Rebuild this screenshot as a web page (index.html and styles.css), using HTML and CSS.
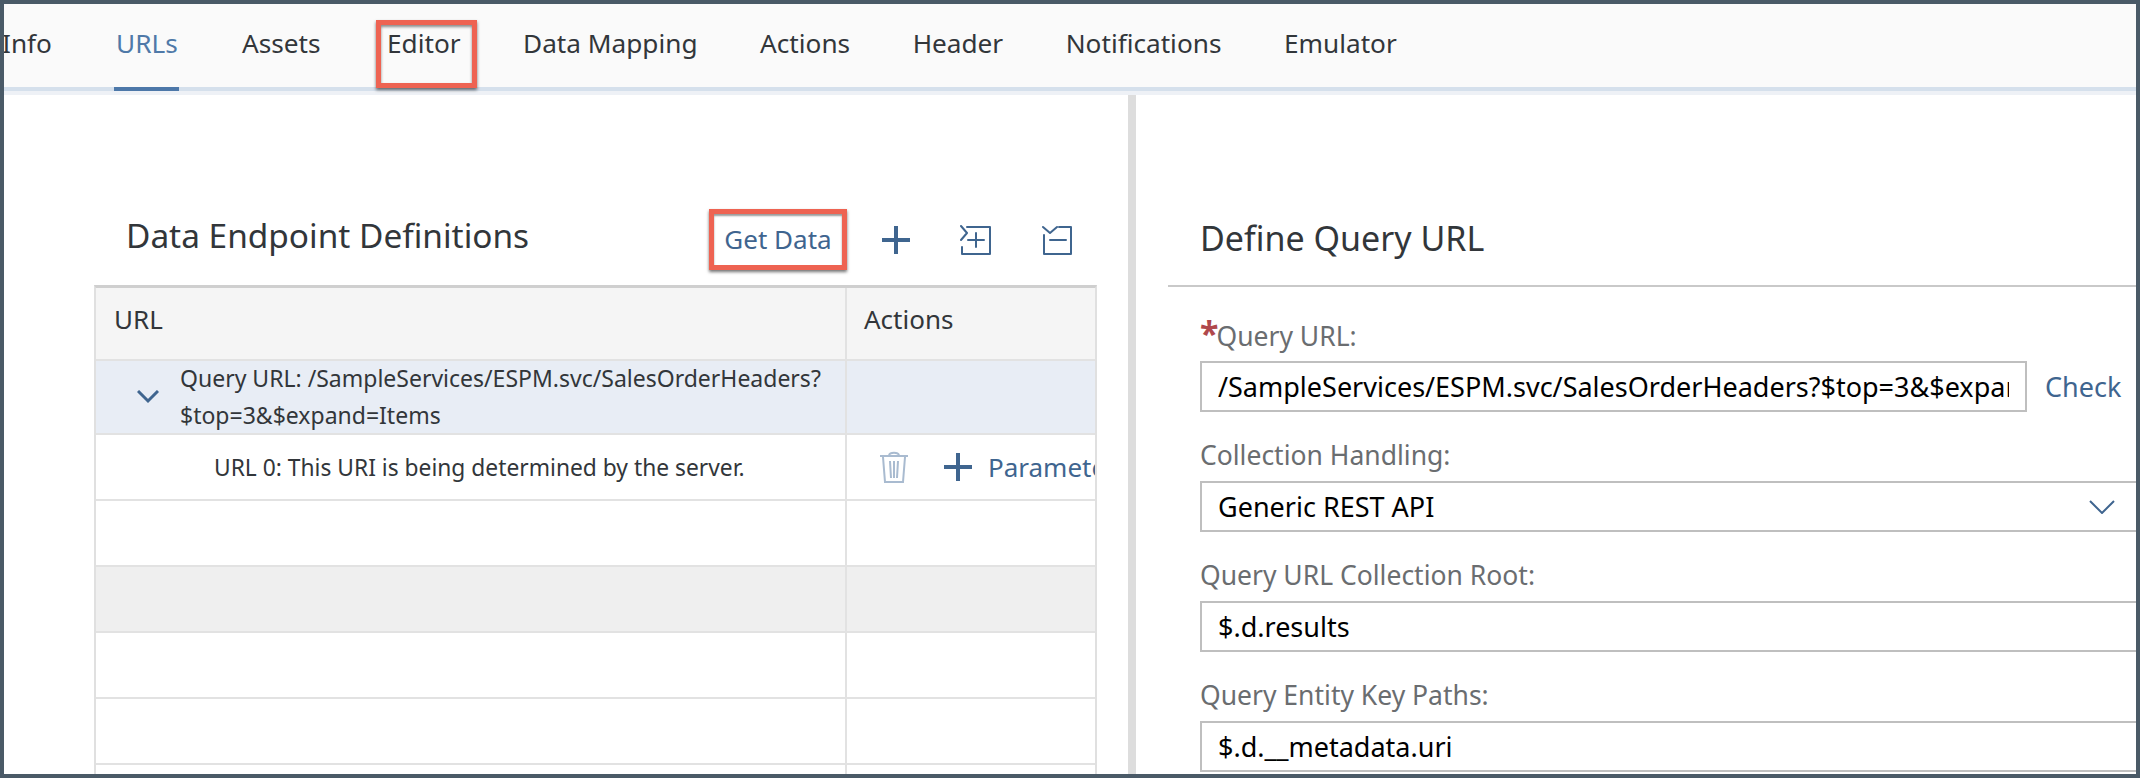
FILE: index.html
```html
<!DOCTYPE html>
<html lang="en">
<head>
<meta charset="utf-8">
<title>Data Endpoint Definitions</title>
<link rel="stylesheet" href="styles.css">
</head>
<body>
<div class="frame">
  <nav class="tabs">
    <a class="tab tab-first">Info</a>
    <a class="tab tab-active">URLs</a>
    <a class="tab">Assets</a>
    <a class="tab tab-marked">Editor</a>
    <a class="tab">Data Mapping</a>
    <a class="tab">Actions</a>
    <a class="tab">Header</a>
    <a class="tab">Notifications</a>
    <a class="tab">Emulator</a>
  </nav>
  <div class="tabs-shade"></div>
  <main class="content">
    <section class="left">
      <div class="toolbar">
        <h2 class="title">Data Endpoint Definitions</h2>
        <button class="get-data">Get Data</button>
        <svg class="tool-plus" viewBox="0 0 28 28"><path d="M14 0v28M0 14h28"/></svg>
        <svg class="tool-icon tool-expand" viewBox="0 0 31 30"><path d="M1 1l6 7-6 7M7 2h23v27H2v-7M8 15h16M16 8v14"/></svg>
        <svg class="tool-icon tool-collapse" viewBox="0 0 31 30"><path d="M1 2l7 6 7-6M17 2h12v27H2V10M8 15h16"/></svg>
      </div>
      <div class="table">
        <div class="row row-head">
          <div class="cell cell-url">URL</div>
          <div class="cell cell-actions">Actions</div>
        </div>
        <div class="row row-parent">
          <div class="cell cell-url cell-tree">
            <svg class="row-chevron" viewBox="0 0 22 14"><path d="M1 1l10 10L21 1"/></svg>
            <span class="query-text">Query URL: /SampleServices/ESPM.svc/SalesOrderHeaders?<br>$top=3&amp;$expand=Items</span>
          </div>
          <div class="cell cell-actions"></div>
        </div>
        <div class="row">
          <div class="cell cell-url cell-child">URL 0: This URI is being determined by the server.</div>
          <div class="cell cell-actions cell-tools">
            <svg class="trash" viewBox="0 0 28 32"><path d="M0 5h28M9 4c1-3 9-3 10 0M3 6l2 25h18l2-25M10 10l1 17M14 10v17M18 10l-1 17"/></svg>
            <svg class="row-plus" viewBox="0 0 28 28"><path d="M14 0v28M0 14h28"/></svg>
            <span class="link">Parameters</span>
          </div>
        </div>
        <div class="row"><div class="cell cell-url"></div><div class="cell cell-actions"></div></div>
        <div class="row row-grey"><div class="cell cell-url"></div><div class="cell cell-actions"></div></div>
        <div class="row"><div class="cell cell-url"></div><div class="cell cell-actions"></div></div>
        <div class="row"><div class="cell cell-url"></div><div class="cell cell-actions"></div></div>
        <div class="row"><div class="cell cell-url"></div><div class="cell cell-actions"></div></div>
      </div>
    </section>
    <div class="splitter"></div>
    <section class="right">
      <h2 class="right-title">Define Query URL</h2>
      <div class="form">
        <label class="label"><span class="req">*</span>Query URL:</label>
        <div class="field-line">
          <div class="input input-url"><span class="value">/SampleServices/ESPM.svc/SalesOrderHeaders?$top=3&amp;$expand=Items</span></div>
          <span class="link check">Check</span>
        </div>
        <label class="label">Collection Handling:</label>
        <div class="input input-wide">
          <span class="value">Generic REST API</span>
          <svg class="select-chevron" viewBox="0 0 26 14"><path d="M1 1l12 12L25 1"/></svg>
        </div>
        <label class="label">Query URL Collection Root:</label>
        <div class="input input-wide"><span class="value">$.d.results</span></div>
        <label class="label">Query Entity Key Paths:</label>
        <div class="input input-wide"><span class="value">$.d.__metadata.uri</span></div>
      </div>
    </section>
  </main>
</div>
</body>
</html>
```
FILE: styles.css
```css
* { box-sizing: border-box; }
html, body { margin: 0; padding: 0; height: 778px; overflow: hidden; background: #fff; }
body { font-family: "Noto Sans", "Open Sans", sans-serif; color: #32363a; }

.frame {
  width: 2140px;
  height: 778px;
  border: 4px solid #4a5a67;
  background: #fff;
  display: flex;
  flex-direction: column;
  overflow: hidden;
}

.tabs {
  height: 83px;
  flex: none;
  background: #fafafa;
  display: flex;
  align-items: stretch;
  font-size: 26.2px;
  gap: 62.5px;
}
.tab {
  position: relative;
  display: flex;
  align-items: flex-start;
  padding-top: 21px;
  line-height: 36px;
  white-space: nowrap;
}
.tab-first { margin: 0 0 0 -2px; }
.tab-active { color: #4f79a8; width: 65px; justify-content: center; }
.tab-active::after {
  content: "";
  position: absolute;
  left: 0;
  right: 0;
  bottom: -4px;
  height: 4px;
  background: #4d78a9;
}
.tab-marked { margin-left: 4px; }
.tab-marked::before {
  content: "";
  position: absolute;
  left: -11px;
  right: -16px;
  top: 16px;
  height: 58px;
  border: 5px solid #ee6352;
  box-shadow: 0 2px 3px rgba(0, 0, 0, .55), inset 0 2px 3px rgba(0, 0, 0, .45);
}

.tabs-shade {
  flex: none;
  height: 8px;
  background: linear-gradient(#d5e0ec 0 4px, #eef1f6 4px 8px);
}

.content {
  flex: 1;
  min-height: 0;
  display: flex;
  overflow: hidden;
}

.left {
  flex: none;
  width: 1124px;
  padding: 114px 0 0 90px;
}
.toolbar {
  width: 1003px;
  height: 76px;
  display: flex;
  align-items: center;
  padding: 0 0 15px 32px;
}
.title {
  margin: 0 auto 10px 0;
  font-size: 33.4px;
  font-weight: 400;
  line-height: 46px;
}
.get-data {
  flex: none;
  width: 138px;
  height: 61px;
  margin-right: 35px;
  padding: 0 0 2px;
  background: #fff;
  border: 5px solid #ee6352;
  box-shadow: 0 2px 3px rgba(0, 0, 0, .55), inset 0 2px 2px rgba(0, 0, 0, .4);
  color: #3f658f;
  font: 400 26px "Noto Sans", "Open Sans", sans-serif;
}
.tool-plus, .row-plus {
  flex: none;
  width: 28px;
  height: 28px;
  fill: none;
  stroke: #3f658f;
  stroke-width: 4;
}
.tool-plus { margin-right: 50px; }
.tool-icon {
  flex: none;
  width: 31px;
  height: 30px;
  fill: none;
  stroke: #3f658f;
  stroke-width: 2;
  stroke-linecap: round;
  stroke-linejoin: round;
}
.tool-expand { margin-right: 51px; }
.tool-collapse { margin-right: 24px; }

.table {
  width: 1003px;
  border-top: 3px solid #cfcfcf;
  border-left: 2px solid #e0e0e0;
  border-right: 2px solid #e0e0e0;
}
.row {
  display: flex;
  height: 66px;
  border-bottom: 2px solid #e2e2e2;
  font-size: 23px;
}
.row-head {
  height: 73px;
  background: #f5f5f5;
  font-size: 26px;
}
.row-parent { height: 74px; background: #e8edf5; }
.row-grey { background: #efefef; }
.cell {
  display: flex;
  align-items: center;
  overflow: hidden;
}
.cell-url { width: 749px; flex: none; padding-left: 18px; }
.cell-actions {
  flex: 1;
  min-width: 0;
  padding-left: 17px;
  border-left: 2px solid #e2e2e2;
}
.row-head .cell { padding-bottom: 9px; }
.cell-tree { padding-left: 41px; }
.row-chevron {
  flex: none;
  width: 22px;
  height: 14px;
  margin-right: 21px;
  fill: none;
  stroke: #3f658f;
  stroke-width: 3;
}
.query-text { line-height: 37px; white-space: nowrap; }
.cell-child { padding-left: 118px; font-size: 22.8px; white-space: nowrap; }
.cell-tools { padding-left: 33px; white-space: nowrap; }
.trash {
  flex: none;
  width: 28px;
  height: 32px;
  margin-right: 36px;
  fill: none;
  stroke: #a9bbd0;
  stroke-width: 2;
}
.row-plus { margin-right: 16px; }
.link { color: #3f658f; font-size: 26px; }

.splitter { flex: none; width: 8px; background: #dddddd; }

.right {
  flex: 1;
  min-width: 0;
  padding: 114px 0 0 32px;
  overflow: hidden;
}
.right-title {
  margin: 0;
  height: 78px;
  padding: 6px 0 0 32px;
  border-bottom: 2px solid #c9c9c9;
  font-size: 34px;
  font-weight: 400;
  line-height: 46px;
}
.form { padding: 36px 0 0 32px; }
.label {
  display: block;
  height: 38px;
  font-size: 26.5px;
  line-height: 24px;
  color: #6a6d70;
}
.req { margin-right: -2px; color: #b0484c; font-weight: 700; font-size: 34px; line-height: 20px; }
.field-line { display: flex; align-items: center; margin-bottom: 31px; }
.input {
  height: 51px;
  display: flex;
  align-items: center;
  padding: 0 16px;
  border: 2px solid #bfbfbf;
  background: #fff;
  color: #000;
  font-size: 27px;
  white-space: nowrap;
}
.input-url { width: 827px; flex: none; }
.value { min-width: 0; overflow: hidden; }
.check { margin-left: 18px; font-size: 27px; }
.input-wide { margin-right: -10px; margin-bottom: 31px; position: relative; }
.select-chevron {
  position: absolute;
  right: 29px;
  top: 17px;
  width: 26px;
  height: 14px;
  fill: none;
  stroke: #3f658f;
  stroke-width: 2;
}
```
